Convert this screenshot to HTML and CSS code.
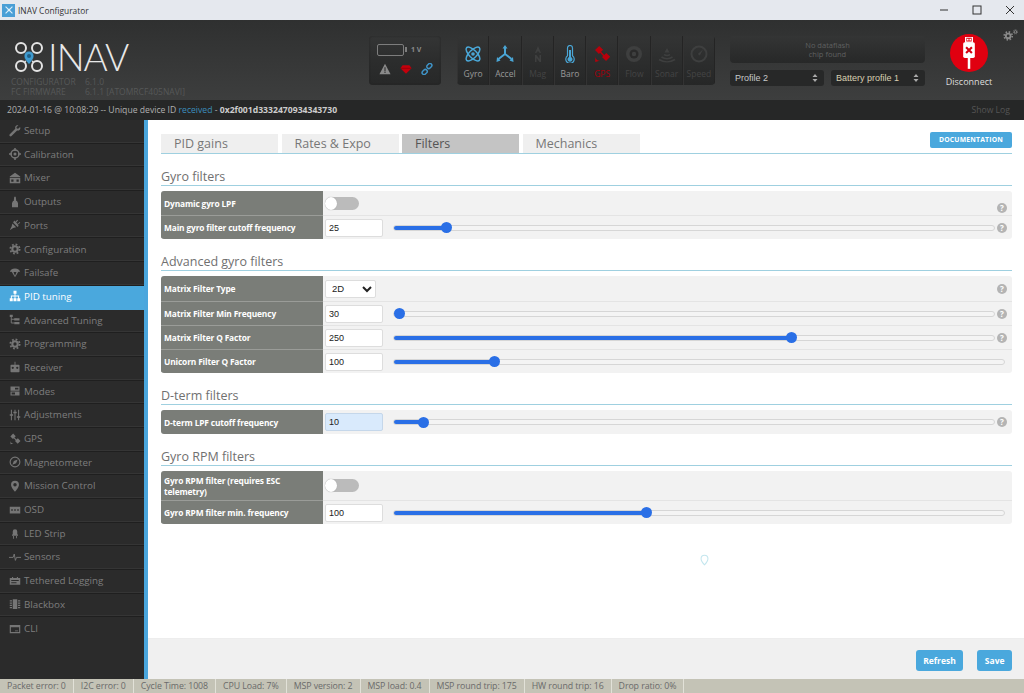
FILE: index.html
```html
<!DOCTYPE html>
<html lang="en">
<head>
<meta charset="utf-8">
<title>INAV Configurator</title>
<link rel="stylesheet" href="styles.css">
</head>
<body>
<svg class="defs" width="0" height="0">
  <defs>
    <symbol id="gear" viewBox="0 0 16 16"><circle cx="8" cy="8" r="3.6" fill="none" stroke="currentColor" stroke-width="2.8"/><circle cx="8" cy="8" r="6.2" fill="none" stroke="currentColor" stroke-width="2.4" stroke-dasharray="2.4 2.47"/></symbol>
    <symbol id="wrench" viewBox="0 0 16 16"><path fill="currentColor" d="M14.8 2.6l-2.6 2.5-1.9-.4-.4-1.9L12.500.6C10.700 0 8.800 1 8.300 2.700c-.2.8-.1 1.500.1 2.200L1 12.300c-.7.700-.7 1.700 0 2.400s1.700.7 2.400 0l7.400-7.400c.7.200 1.400.3 2.100.100 1.900-.6 2.800-2.800 1.900-4.800z"/></symbol>
    <symbol id="target" viewBox="0 0 16 16"><circle cx="8" cy="8" r="5.300" fill="none" stroke="currentColor" stroke-width="2"/><circle cx="8" cy="8" r="2" fill="currentColor"/><path fill="currentColor" d="M7 0h2v4H7zM7 12h2v4H7zM0 7h4v2H0zM12 7h4v2h-4z"/></symbol>
    <symbol id="mixer" viewBox="0 0 16 16"><path fill="currentColor" d="M8 1l7 5v1H1V6zM1 8h14v7H1zm2 2v3h3v-3zm7 0v3h3v-3z"/></symbol>
    <symbol id="motor" viewBox="0 0 16 16"><path fill="currentColor" d="M7 1h2l.7 5.500H11V8l1 1v6H4V9l1-1V6.500h1.300z"/></symbol>
    <symbol id="plug" viewBox="0 0 16 16"><path fill="currentColor" d="M1 15l2.500-5 1-4 5 5-4 1zM5.500 4.500l6 6 1.500-1.500-1.500-1.500L15 5l-1-1-2.500 2.500L9.500 4.500 12 2l-1-1-2.500 2.500L7 2z"/></symbol>
    <symbol id="chute" viewBox="0 0 16 16"><path fill="currentColor" d="M8 2c3.800 0 6.500 2.200 7 5-1-.8-2-.8-3 0L8.500 13h-1L4 7c-1-.8-2-.8-3 0 .5-2.800 3.200-5 7-5zM6 7l2 4.500L10 7c-1.300-.6-2.700-.6-4 0z"/></symbol>
    <symbol id="tree" viewBox="0 0 16 16"><path fill="currentColor" d="M6 1h4v4H8.600v2.400H13.500V11H15v4h-4v-4h1.200V8.700H8.600V11H10v4H6v-4h1.400V8.700H3.800V11H5v4H1v-4h1.500V7.400h4.900V5H6z"/></symbol>
    <symbol id="branch" viewBox="0 0 16 16"><path fill="none" stroke="currentColor" stroke-width="1.300" d="M3 4v8h4M3 7h8"/><path fill="currentColor" d="M1 1h4v3H1zM7 5.500h7v3H7zM7 10.500h7v3H7z"/></symbol>
    <symbol id="radio" viewBox="0 0 16 16"><path fill="currentColor" d="M7.400 1h1.200v4H13a1 1 0 0 1 1 1v8a1 1 0 0 1-1 1H3a1 1 0 0 1-1-1V6a1 1 0 0 1 1-1h4.400zM5 7.500a1.500 1.500 0 1 0 0 3 1.500 1.500 0 0 0 0-3zm6 0a1.500 1.500 0 1 0 0 3 1.500 1.500 0 0 0 0-3z"/></symbol>
    <symbol id="modes" viewBox="0 0 16 16"><path fill="currentColor" d="M2 2h12v5.500H2zm6 1.500v2.500h4.500V3.500zM2 8.500h12V14H2zm1.500 1.500v2.500H8V10z"/></symbol>
    <symbol id="sliders" viewBox="0 0 16 16"><path fill="currentColor" d="M2.500 1h1.400v6H5.500v2H3.900v6H2.500V9H1V7h1.500zM7.300 1h1.400v2.500h1.600v2H8.700V15H7.300V5.500H5.800v-2h1.500zM12.100 1h1.400v8.500H15v2h-1.500V15h-1.400v-3.500h-1.600v-2h1.600z"/></symbol>
    <symbol id="sat" viewBox="0 0 16 16"><path fill="currentColor" d="M5.500.8L9 4.300 7.200 6l2.800 2.800L11.800 7l3.500 3.500-3.700 3.700L8 10.700l1-1-2.700-2.800-1 1L1.800 4.500zM2 10a4 4 0 0 0 4 4l-4 1z"/></symbol>
    <symbol id="compass" viewBox="0 0 16 16"><circle cx="8" cy="8" r="6.500" fill="none" stroke="currentColor" stroke-width="1.500"/><path fill="currentColor" d="M11.500 4.500L9.500 9.500 6.500 6.500zM4.500 11.500l2-5 3 3z"/></symbol>
    <symbol id="pin" viewBox="0 0 16 16"><path fill-rule="evenodd" fill="currentColor" d="M8 1a5.300 5.300 0 0 1 5.300 5.300C13.300 10 8 15.500 8 15.500S2.700 10 2.700 6.300A5.300 5.300 0 0 1 8 1zm0 3a2.300 2.300 0 1 0 0 4.600A2.300 2.300 0 0 0 8 4z"/></symbol>
    <symbol id="osd" viewBox="0 0 16 16"><path fill="currentColor" fill-rule="evenodd" d="M1 3.500h14v9H1zM3 7v2h2V7zm4 0v2h2V7zm4 0v2h2V7z"/></symbol>
    <symbol id="led" viewBox="0 0 16 16"><path fill="currentColor" d="M5 6a3 3 0 0 1 6 0v4h1v1.500H4V10h1zM5.500 12h1.200v3.500H5.500zM9.300 12h1.200v3H9.300z"/></symbol>
    <symbol id="pulse" viewBox="0 0 16 16"><path fill="none" stroke="currentColor" stroke-width="1.300" d="M0 8.500h5.500L7 4l1.500 8.500L10 8.500h6"/></symbol>
    <symbol id="log" viewBox="0 0 16 16"><path fill="currentColor" fill-rule="evenodd" d="M1 4h3V2.500h1.500V4h5V2.500H12V4h3v9H1zm2 2.500V8h10V6.500zM3 9.500V11h7V9.500z"/></symbol>
    <symbol id="chip" viewBox="0 0 16 16"><path fill="currentColor" d="M5 1.500h6v13H5zM1 3h3v1.500H1zM1 6h3v1.500H1zM1 9h3v1.500H1zM1 12h3v1.500H1zM12 3h3v1.500h-3zM12 6h3v1.500h-3zM12 9h3v1.500h-3zM12 12h3v1.500h-3z"/></symbol>
    <symbol id="term" viewBox="0 0 16 16"><path fill="currentColor" fill-rule="evenodd" d="M1 2.500h14v11H1zM2.500 5.500V12h11V5.500zM8 10h4v1H8z"/></symbol>
  </defs>
</svg>

<div class="app">
  <header class="titlebar">
    <span class="app-icon"><svg viewBox="0 0 14 14" width="12" height="12"><path d="M3 3l8 8M11 3l-8 8" stroke="#dff1fb" stroke-width="1.300"/><circle cx="7" cy="7" r="1.500" fill="#dff1fb"/></svg></span>
    <span class="app-name">INAV Configurator</span>
    <span class="winctl">
      <svg viewBox="0 0 10 10" width="10" height="10"><path d="M1 5h8" stroke="#333" stroke-width="1"/></svg>
      <svg viewBox="0 0 10 10" width="10" height="10"><rect x="1" y="1" width="8" height="8" fill="none" stroke="#333" stroke-width="1"/></svg>
      <svg viewBox="0 0 10 10" width="10" height="10"><path d="M1 1l8 8M9 1l-8 8" stroke="#333" stroke-width="1"/></svg>
    </span>
  </header>

  <section class="topbar">
    <div class="brand">
      <div class="logo">
        <svg class="logo-mark" viewBox="0 0 30 32" width="30" height="32">
          <g fill="none" stroke="#e4e4e4" stroke-width="2">
            <circle cx="7" cy="7" r="5"/><circle cx="23" cy="7" r="5"/><circle cx="7" cy="25" r="5"/><circle cx="23" cy="25" r="5"/>
            <path d="M11 11l8 10M19 11l-8 10"/>
          </g>
          <path d="M15 10a5 5 0 0 1 5 5c0 3.500-5 8.500-5 8.500s-5-5-5-8.500a5 5 0 0 1 5-5z" fill="#3f9bd0" stroke="#333" stroke-width=".8"/>
          <circle cx="15" cy="15" r="2" fill="#1f5f86"/>
        </svg>
        <span class="logo-text">INAV</span>
      </div>
      <div class="versions">
        <div><span class="ver-key">CONFIGURATOR</span>6.1.0</div>
        <div><span class="ver-key">FC FIRMWARE</span>6.1.1 [ATOMRCF405NAVI]</div>
      </div>
    </div>

    <div class="battery-panel">
      <div class="batt-top">
        <span class="batt-shell"></span><span class="batt-volt">1 V</span>
      </div>
      <div class="batt-icons">
        <svg viewBox="0 0 14 14" width="12" height="12"><path d="M7 1l6.500 12H.5z" fill="#8a8a8a"/><path d="M6.400 5h1.200v4.500H6.400zM6.400 10.300h1.200v1.300H6.400z" fill="#2b2b2b"/></svg>
        <svg viewBox="0 0 14 14" width="12" height="12"><path d="M3 2.500h8l2.500 3.500L7 12.500.5 6z" fill="#c4000c"/><path d="M1 6.200h12" stroke="#7d0008" stroke-width=".7"/></svg>
        <svg viewBox="0 0 14 14" width="12" height="12"><g fill="none" stroke="#3f94c8" stroke-width="1.700"><rect x="6.500" y="1.200" width="6.500" height="4.500" rx="2.200" transform="rotate(-45 9.700 3.500)"/><rect x="1" y="8.300" width="6.500" height="4.500" rx="2.200" transform="rotate(-45 4.300 10.500)"/></g></svg>
      </div>
    </div>

    <div class="sensors">
      <div class="sensor on"><svg viewBox="0 0 18 18" width="18" height="18"><g fill="none" stroke="currentColor" stroke-width="1.500"><ellipse cx="9" cy="9" rx="9" ry="3.800" transform="rotate(45 9 9)"/><ellipse cx="9" cy="9" rx="9" ry="3.800" transform="rotate(-45 9 9)"/></g><circle cx="9" cy="9" r="1.800" fill="currentColor"/></svg><span>Gyro</span></div>
      <div class="sensor on"><svg viewBox="0 0 18 18" width="18" height="18"><path d="M9 9V2M9 9l-6.500 5M9 9l6.500 5" fill="none" stroke="currentColor" stroke-width="2"/><path d="M9 0l2.500 3.500h-5zM.5 17l.5-5 3.500 3.500zM17.500 17l-.5-5-3.500 3.500z" fill="currentColor"/></svg><span>Accel</span></div>
      <div class="sensor"><svg viewBox="0 0 18 18" width="18" height="18"><path d="M6 8l3-7 3 7h-1.500L10 6.500H8L7.500 8zM6 17V10h1.500l3 4v-4H12v7h-1.500l-3-4v4z" fill="currentColor"/></svg><span>Mag</span></div>
      <div class="sensor on"><svg viewBox="0 0 18 18" width="18" height="18"><path d="M9 .5a2.500 2.500 0 0 1 2.500 2.500v7.800a4.200 4.200 0 1 1-5 0V3A2.500 2.500 0 0 1 9 .5z" fill="none" stroke="currentColor" stroke-width="1.200"/><path d="M8 5h2v7a2.500 2.500 0 1 1-2 0z" fill="currentColor"/></svg><span>Baro</span></div>
      <div class="sensor err"><svg viewBox="0 0 18 18" width="18" height="18"><use href="#sat"/></svg><span>GPS</span></div>
      <div class="sensor"><svg viewBox="0 0 18 18" width="18" height="18"><circle cx="9" cy="9" r="8" fill="currentColor"/><circle cx="9" cy="9" r="4.500" fill="#2a2a2a"/><circle cx="9" cy="9" r="2.200" fill="currentColor"/></svg><span>Flow</span></div>
      <div class="sensor"><svg viewBox="0 0 18 18" width="18" height="18"><g fill="none" stroke="currentColor" stroke-width="1.700"><path d="M6 9.500c1.800 1.200 4.200 1.200 6 0M3.500 12c3.200 2.200 7.800 2.200 11 0M1 14.500c4.800 3 11.200 3 16 0"/></g><path d="M9 3l2.500 4.500h-5z" fill="currentColor"/></svg><span>Sonar</span></div>
      <div class="sensor"><svg viewBox="0 0 18 18" width="18" height="18"><circle cx="9" cy="9" r="7.500" fill="none" stroke="currentColor" stroke-width="2"/><path d="M13 4.500L9.800 10.500 7.800 9z" fill="currentColor"/></svg><span>Speed</span></div>
    </div>

    <div class="flash-col">
      <div class="dataflash">No dataflash<br>chip found</div>
      <div class="profiles">
        <div class="profile">Profile 2<svg viewBox="0 0 6 10" width="6" height="10"><path d="M3 1l2.500 3h-5zM3 9L.5 6h5z" fill="#aaa"/></svg></div>
        <div class="profile warm">Battery profile 1<svg viewBox="0 0 6 10" width="6" height="10"><path d="M3 1l2.500 3h-5zM3 9L.5 6h5z" fill="#aaa"/></svg></div>
      </div>
    </div>

    <div class="connect">
      <span class="connect-btn">
        <svg viewBox="0 0 24 38" width="20" height="32"><path d="M8 0h8v6H8z" fill="none" stroke="#fff" stroke-width="1.600"/><path d="M9.500 2h2v2h-2zM12.500 2h2v2h-2z" fill="#fff"/><rect x="5" y="6" width="14" height="19" rx="2" fill="#fff"/><path d="M10.500 25h3v13h-3z" fill="#fff"/><path d="M8.500 12l7 7M15.500 12l-7 7" stroke="#d40010" stroke-width="2.500"/></svg>
      </span>
      <span class="connect-label">Disconnect</span>
    </div>
    <svg class="settings" viewBox="0 0 20 16" width="16" height="13"><use href="#gear" x="0" y="2" width="13" height="13"/><use href="#gear" x="12" y="0" width="7" height="7"/></svg>
  </section>

  <div class="logbar">
    <span>2024-01-16 @ 10:08:29 -- Unique device ID <em>received</em> - <strong>0x2f001d3332470934343730</strong></span>
    <span class="showlog">Show Log</span>
  </div>

  <div class="body">
    <nav class="sidebar">
      <a class="nav"><svg><use href="#wrench"/></svg>Setup</a>
      <a class="nav"><svg><use href="#target"/></svg>Calibration</a>
      <a class="nav"><svg><use href="#mixer"/></svg>Mixer</a>
      <a class="nav"><svg><use href="#motor"/></svg>Outputs</a>
      <a class="nav"><svg><use href="#plug"/></svg>Ports</a>
      <a class="nav"><svg><use href="#gear"/></svg>Configuration</a>
      <a class="nav"><svg><use href="#chute"/></svg>Failsafe</a>
      <a class="nav active"><svg><use href="#tree"/></svg>PID tuning</a>
      <a class="nav"><svg><use href="#branch"/></svg>Advanced Tuning</a>
      <a class="nav"><svg><use href="#gear"/></svg>Programming</a>
      <a class="nav"><svg><use href="#radio"/></svg>Receiver</a>
      <a class="nav"><svg><use href="#modes"/></svg>Modes</a>
      <a class="nav"><svg><use href="#sliders"/></svg>Adjustments</a>
      <a class="nav"><svg><use href="#sat"/></svg>GPS</a>
      <a class="nav"><svg><use href="#compass"/></svg>Magnetometer</a>
      <a class="nav"><svg><use href="#pin"/></svg>Mission Control</a>
      <a class="nav"><svg><use href="#osd"/></svg>OSD</a>
      <a class="nav"><svg><use href="#led"/></svg>LED Strip</a>
      <a class="nav"><svg><use href="#pulse"/></svg>Sensors</a>
      <a class="nav"><svg><use href="#log"/></svg>Tethered Logging</a>
      <a class="nav"><svg><use href="#chip"/></svg>Blackbox</a>
      <a class="nav"><svg><use href="#term"/></svg>CLI</a>
    </nav>

    <main class="main">
      <div class="scroll">
        <div class="tabs">
          <a class="tab">PID gains</a>
          <a class="tab">Rates &amp; Expo</a>
          <a class="tab current">Filters</a>
          <a class="tab">Mechanics</a>
          <a class="doc-btn">DOCUMENTATION</a>
        </div>

        <h2 class="heading">Gyro filters</h2>
        <div class="table">
          <div class="row">
            <div class="label">Dynamic gyro LPF</div>
            <div class="cell"><span class="toggle"></span><span class="help low">?</span></div>
          </div>
          <div class="row">
            <div class="label">Main gyro filter cutoff frequency</div>
            <div class="cell"><input class="num" type="text" value="25"><input class="range" type="range" step="0.1" value="8" style="--v:8.8%"><span class="help">?</span></div>
          </div>
        </div>

        <h2 class="heading">Advanced gyro filters</h2>
        <div class="table">
          <div class="row row-select">
            <div class="label">Matrix Filter Type</div>
            <div class="cell"><select class="sel"><option>2D</option></select><span class="help">?</span></div>
          </div>
          <div class="row">
            <div class="label">Matrix Filter Min Frequency</div>
            <div class="cell"><input class="num" type="text" value="30"><input class="range" type="range" step="0.1" value="0" style="--v:0%"><span class="help">?</span></div>
          </div>
          <div class="row">
            <div class="label">Matrix Filter Q Factor</div>
            <div class="cell"><input class="num" type="text" value="250"><input class="range" type="range" step="0.1" value="66.6" style="--v:66.3%"><span class="help">?</span></div>
          </div>
          <div class="row">
            <div class="label">Unicorn Filter Q Factor</div>
            <div class="cell nohelp"><input class="num" type="text" value="100"><input class="range" type="range" step="0.1" value="15.9" style="--v:16.5%"></div>
          </div>
        </div>

        <h2 class="heading">D-term filters</h2>
        <div class="table">
          <div class="row">
            <div class="label">D-term LPF cutoff frequency</div>
            <div class="cell"><input class="num filled" type="text" value="10"><input class="range" type="range" step="0.1" value="4" style="--v:4.8%"><span class="help">?</span></div>
          </div>
        </div>

        <h2 class="heading">Gyro RPM filters</h2>
        <div class="table">
          <div class="row row-tall">
            <div class="label">Gyro RPM filter (requires ESC telemetry)</div>
            <div class="cell"><span class="toggle"></span></div>
          </div>
          <div class="row">
            <div class="label">Gyro RPM filter min. frequency</div>
            <div class="cell nohelp"><input class="num" type="text" value="100"><input class="range" type="range" step="0.1" value="41.2" style="--v:41.3%"></div>
          </div>
        </div>

        <svg class="spinner" viewBox="0 0 16 16" width="11" height="12"><path d="M8 1a5 5 0 0 1 5 5c0 3.500-5 9-5 9s-5-5.500-5-9a5 5 0 0 1 5-5z" fill="none" stroke="#c3e6ee" stroke-width="1.500"/></svg>
      </div>

      <div class="toolbar">
        <a class="btn">Refresh</a>
        <a class="btn">Save</a>
      </div>
    </main>
  </div>

  <footer class="status">
    <span>Packet error: 0</span>
    <span>I2C error: 0</span>
    <span>Cycle Time: 1008</span>
    <span>CPU Load: 7%</span>
    <span>MSP version: 2</span>
    <span>MSP load: 0.4</span>
    <span>MSP round trip: 175</span>
    <span>HW round trip: 16</span>
    <span>Drop ratio: 0%</span>
  </footer>
</div>
</body>
</html>
```

FILE: styles.css
```css
* { box-sizing: border-box; }
html, body { margin: 0; height: 100%; overflow: hidden; }
body { font-family: "Open Sans", "Noto Sans", sans-serif; background: #fff; color: #777; }
.defs { position: absolute; }
.app { width: 1024px; height: 693px; display: flex; flex-direction: column; }

.titlebar { height: 20px; flex: none; background: #e5e8ee; display: flex; align-items: center; padding-left: 2px; }
.app-icon { width: 13px; height: 13px; background: #4a9fd6; display: flex; align-items: center; justify-content: center; }
.app-name { margin-left: 3px; font-size: 8.400px; color: #333; }
.winctl { margin-left: auto; display: flex; gap: 23px; padding-right: 9px; }

.topbar { height: 80px; flex: none; background: linear-gradient(#2f3030, #3d3e3e); display: flex; align-items: flex-start; padding-top: 16px; position: relative; }
.brand { width: 369px; flex: none; padding: 5px 0 0 11px; }
.logo { display: flex; align-items: center; height: 32px; padding-left: 3px; }
.logo-text { font-family: "Lato", sans-serif; font-weight: 300; font-size: 37px; line-height: 32px; color: #e8e8e8; margin-left: 4px; letter-spacing: -1px; }
.versions { margin-top: 4px; font-size: 8.500px; line-height: 10px; color: #565858; white-space: nowrap; }
.ver-key { display: inline-block; width: 74px; }

.battery-panel { width: 72px; height: 49px; flex: none; border-radius: 4px; background: linear-gradient(#343535, #2c2d2d 50%, #272828); box-shadow: inset 0 0 2px #222; display: flex; flex-direction: column; }
.batt-top { height: 27px; display: flex; align-items: center; padding-left: 8px; }
.batt-shell { width: 27px; height: 12px; border: 1.500px solid #7d7d7d; border-radius: 2px; position: relative; }
.batt-shell::after { content: ""; position: absolute; right: -3.500px; top: 2px; width: 2px; height: 5px; background: #7d7d7d; }
.batt-volt { margin-left: 7px; font-size: 7px; font-weight: 700; color: #8a8a8a; }
.batt-icons { display: flex; gap: 9px; padding-left: 10px; }

.sensors { width: 258px; height: 49px; flex: none; margin-left: 16px; display: flex; border-radius: 4px; overflow: hidden; background: linear-gradient(#333434, #262727); }
.sensor { flex: 1; border-right: 1px solid #242424; border-left: 1px solid #333; display: flex; flex-direction: column; align-items: center; padding-top: 9px; color: #3e3f3f; }
.sensor svg { display: block; height: 18px; fill: currentColor; }
.sensor span { margin-top: 5px; font-size: 8.500px; line-height: 12px; color: #444; }
.sensor.on { color: #4aa6d6; }
.sensor.on span { color: #9a9a9a; }
.sensor.err { color: #b8000b; }
.sensor.err span { color: #a3000a; }

.flash-col { width: 195px; flex: none; margin-left: 15px; }
.dataflash { height: 27px; border-radius: 4px; background: linear-gradient(#343535, #272828); text-align: center; font-size: 7.500px; line-height: 9px; color: #5f6060; padding-top: 5px; }
.profiles { display: flex; justify-content: space-between; margin-top: 7px; }
.profile { width: 94px; height: 16px; border-radius: 3px; background: #272828; padding: 0 6px 0 5px; display: flex; align-items: center; justify-content: space-between; font-family: "Liberation Sans", sans-serif; font-size: 9px; color: #c8c8c8; }
.profile.warm { color: #d8cfb0; }

.connect { width: 64px; flex: none; margin-left: 12px; margin-top: -2px; display: flex; flex-direction: column; align-items: center; }
.connect-btn { width: 38px; height: 38px; border-radius: 50%; background: #e00010; display: flex; align-items: center; justify-content: center; }
.connect-label { margin-top: 4px; font-size: 9px; line-height: 12px; color: #ddd; }
.settings { position: absolute; right: 5px; top: 9px; color: #8a8a8a; }

.logbar { height: 20px; flex: none; background: #262727; display: flex; align-items: center; justify-content: space-between; padding: 0 14px 0 7px; font-size: 8.650px; color: #b0b0b0; white-space: nowrap; }
.logbar em { font-style: normal; color: #3c8dbc; }
.logbar strong { font-weight: 700; color: #ccc; }
.showlog { color: #555; }

.body { flex: 1; min-height: 0; display: flex; }
.sidebar { width: 148px; flex: none; background: #2b2b2b; border-right: 4px solid #4aa6dd; display: flex; flex-direction: column; }
.nav { height: 23.700px; flex: none; display: flex; align-items: center; padding: 0 0 1.500px 9px; gap: 3px; font-size: 9.800px; color: #7e7e7e; border-bottom: 1px solid #1f1f1f; box-shadow: inset 0 -1px 0 #353535; }
.nav svg { width: 12px; height: 12px; color: #757575; flex: none; }
.nav.active { background: #4aa8dd; color: #fff; box-shadow: none; border-bottom-color: #4aa8dd; }
.nav.active svg { color: #fff; }
.nav:last-child { border-bottom: 0; box-shadow: none; }

.main { flex: 1; min-width: 0; display: flex; flex-direction: column; }
.scroll { flex: 1; min-height: 0; padding: 12px 12px 0 13px; position: relative; }

.tabs { display: flex; align-items: flex-start; gap: 3.500px; height: 22px; border-bottom: 1px solid #9fd0e0; }
.tab { width: 117px; height: 19px; margin-top: 2px; padding-left: 13px; background: #efefef; font-size: 12.500px; line-height: 19px; color: #777; }
.tab.current { background: #c4c4c4; color: #555; }
.doc-btn { margin-left: auto; width: 82px; height: 16px; border-radius: 2px; background: #4aa8dd; color: #fff; text-align: center; font-size: 6.800px; font-weight: 700; line-height: 16px; letter-spacing: .2px; }

.heading { margin: 10px 0 5px; height: 22px; border-bottom: 1px solid #9fd0e0; font-size: 12.500px; font-weight: 400; line-height: 26px; color: #707070; }

.table { border-radius: 3px; overflow: hidden; background: #f2f2f2; }
.row { height: 24px; display: grid; grid-template-columns: 162px 1fr; border-top: 1px solid #e4e4e4; }
.row:first-child { border-top: 0; }
.row.row-select { height: 25px; }
.row.row-tall { height: 29px; }
.label { background: #7a7d78; color: #fff; font-size: 8.400px; font-weight: 700; line-height: 11px; padding: 0 4px 0 3px; display: flex; align-items: center; letter-spacing: -.15px; }
.row + .row .label { box-shadow: 0 -1px 0 #9a9c98; }
.cell { display: flex; align-items: center; padding: 0 5px 0 2px; position: relative; }
.cell.nohelp { padding-right: 7px; }
.num { width: 58px; height: 18px; flex: none; border: 1px solid #ddd; border-radius: 2px; background: #fff; padding: 0 0 0 3px; font-family: "Liberation Sans", sans-serif; font-size: 9px; color: #222; outline: none; }
.num.filled { background: #d9eafc; border-color: #c5d7ea; }
.sel { width: 51px; height: 18px; border: 1px solid #ddd; border-radius: 2px; background: #fff; font-family: "Liberation Sans", sans-serif; font-size: 9.500px; color: #222; padding: 0 0 0 2px; }
.sel + .help { margin-left: auto; }

.range { flex: 1; min-width: 0; margin: 0 0 0 10px; height: 12px; appearance: none; -webkit-appearance: none; background: transparent; }
.range::-webkit-slider-runnable-track { height: 6px; border-radius: 3px; border: 1px solid #d6d6d6; background: linear-gradient(to right, #2a6fe6 var(--v), #f4f4f4 var(--v)); }
.range::-webkit-slider-thumb { -webkit-appearance: none; appearance: none; width: 11px; height: 11px; margin-top: -3.500px; border-radius: 50%; background: #2a6fe6; }

.help { flex: none; margin-left: 2px; width: 10px; height: 10px; border-radius: 50%; background: #b4b4b4; color: #fff; font-size: 8px; font-weight: 700; line-height: 10px; text-align: center; }
.help.low { margin-left: auto; transform: translateY(5px); }
.toggle { width: 34px; height: 13px; border-radius: 7px; background: #bbb; position: relative; }
.toggle::after { content: ""; position: absolute; left: 0; top: 0; width: 12px; height: 13px; border-radius: 50%; background: #fff; box-shadow: 0 0 1px #999; }

.spinner { position: absolute; left: 551px; top: 434px; }

.toolbar { height: 41px; flex: none; background: #f0f0f0; border-top: 1px solid #ededed; display: flex; justify-content: flex-end; align-items: center; gap: 14px; padding: 2px 12px 0 0; }
.btn { height: 21px; padding: 0 7.500px; border-radius: 3px; background: #4aa8dd; color: #fff; font-size: 8.500px; font-weight: 700; line-height: 21px; text-align: center; }

.status { height: 14px; flex: none; background: #c4c3b6; display: flex; font-size: 8.800px; line-height: 14px; color: #6a6a6a; white-space: nowrap; letter-spacing: -.08px; }
.status span { padding: 0 7px; border-right: 1px solid #e2e1d8; }
```
